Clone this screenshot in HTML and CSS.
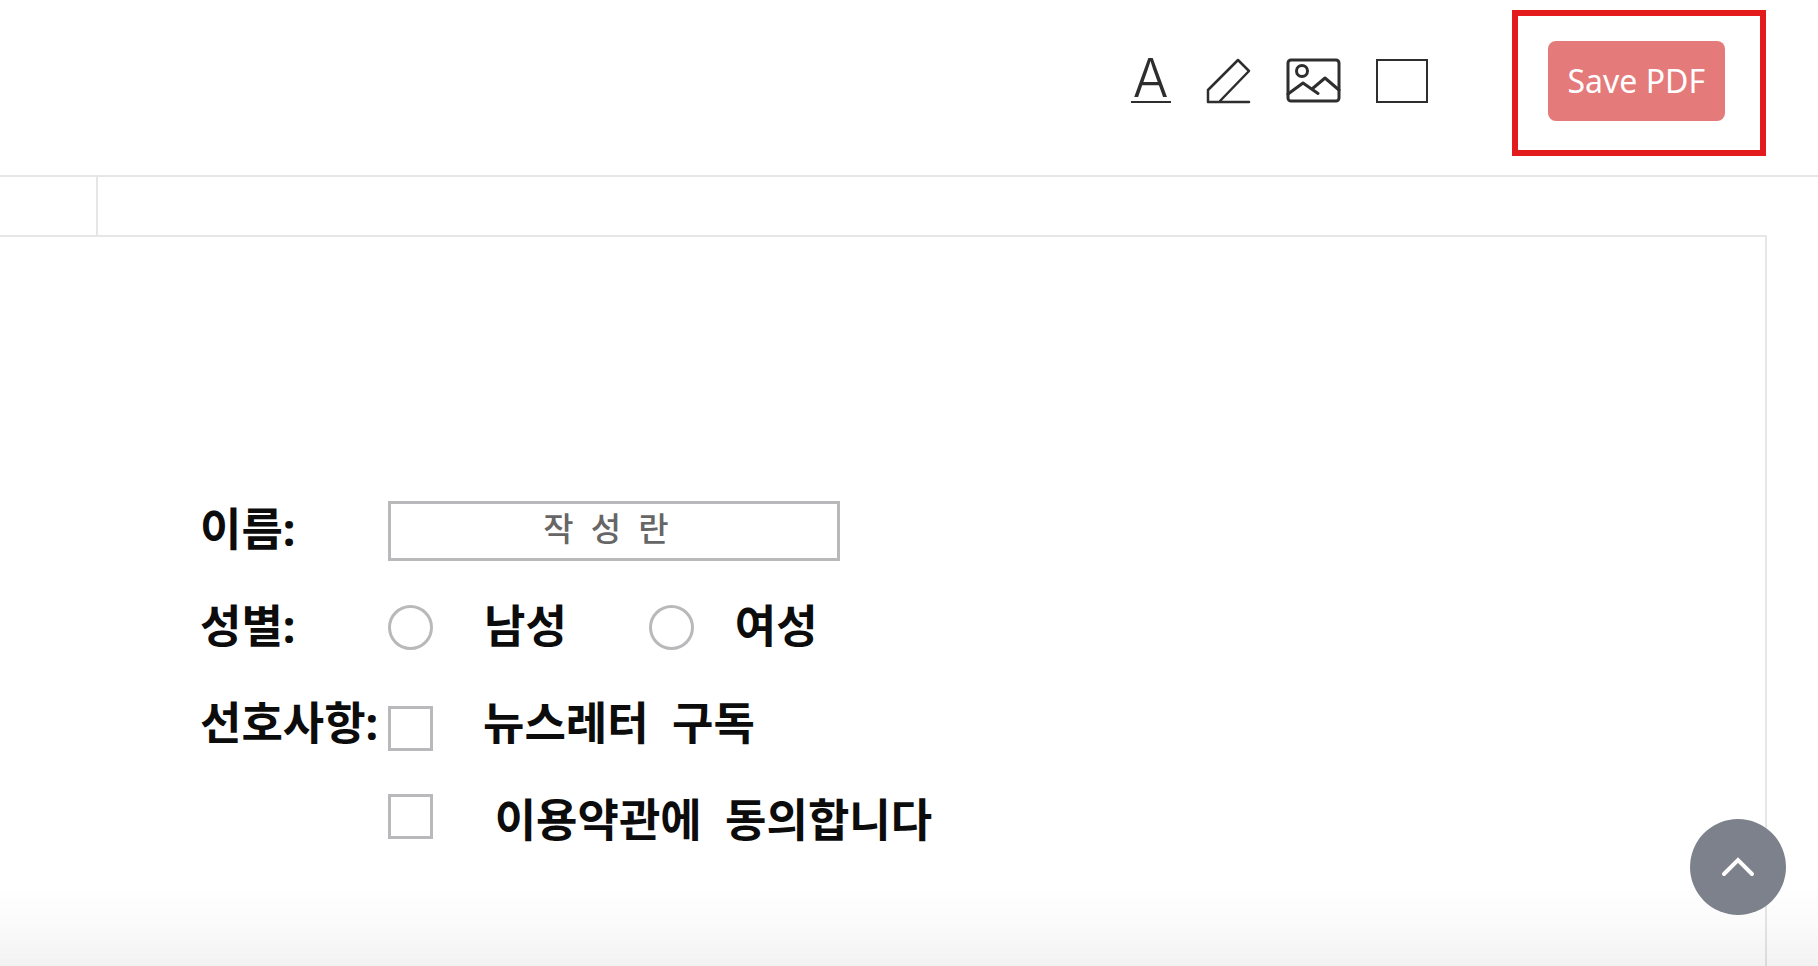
FILE: index.html
```html
<!doctype html>
<html lang="ko">
  <head>
    <meta charset="UTF-8" />
    <meta name="viewport" content="width=device-width, initial-scale=1.0" />
    <title>PDF Form</title>
    <link rel="stylesheet" href="styles.css">
  </head>
  <body>
    <header class="toolbar">
      <div class="tools">
        <button class="tool tool-text" type="button" aria-label="Text">A</button>
        <button class="tool" type="button" aria-label="Draw">
          <svg class="pen" width="46" height="46" viewBox="0 0 46 46">
            <path d="M44 44H3V32L33 2L44 13L15 43" />
          </svg>
        </button>
        <button class="tool" type="button" aria-label="Image">
          <svg class="bold" width="56" height="46" viewBox="0 0 56 46">
            <rect x="3" y="2" width="51" height="41" rx="3" />
            <circle cx="17" cy="13" r="5.5" />
            <path d="M3 36L18 25L33 35.500M27 31L40 20L54 32" />
          </svg>
        </button>
        <button class="tool" type="button" aria-label="Rectangle">
          <svg class="square" width="54" height="46" viewBox="0 0 54 46">
            <rect x="2" y="2" width="50" height="42" />
          </svg>
        </button>
      </div>
      <div class="highlight">
        <button class="save" type="button">Save PDF</button>
      </div>
    </header>

    <div class="strip"><div class="strip-cell"></div></div>

    <main class="document">
      <form class="form">
        <div class="row">
          <label class="name" for="name">이름:</label>
          <input class="field" id="name" type="text" value="작  성  란" />
        </div>
        <div class="row" role="radiogroup" aria-labelledby="gender">
          <span class="name" id="gender">성별:</span>
          <input class="mark round" id="male" type="radio" name="gender" />
          <label class="option male" for="male">남성</label>
          <input class="mark round" id="female" type="radio" name="gender" />
          <label class="option female" for="female">여성</label>
        </div>
        <div class="prefs" role="group" aria-labelledby="prefs">
          <span class="name" id="prefs">선호사항:</span>
          <div class="checks">
            <input class="mark" id="newsletter" type="checkbox" />
            <input class="mark" id="terms" type="checkbox" />
          </div>
          <div class="options">
            <label class="option" for="newsletter">뉴스레터  구독</label>
            <label class="option" for="terms"> 이용약관에  동의합니다</label>
          </div>
        </div>
      </form>
    </main>

    <button class="to-top" type="button" aria-label="Scroll to top">
      <svg width="36" height="24" viewBox="0 0 36 24">
        <path d="M4 19L18 5L32 19" />
      </svg>
    </button>
  </body>
</html>
```
FILE: styles.css
```css
* {
  box-sizing: border-box;
}
body {
  margin: 0;
  height: 100vh;
  overflow: hidden;
  display: flex;
  flex-direction: column;
  background: #fff;
  font-family: "Noto Sans", "Noto Sans CJK KR", sans-serif;
}
/* fade along the bottom of the window */
body::after {
  content: "";
  position: fixed;
  left: 0;
  right: 0;
  bottom: 0;
  height: 80px;
  background: linear-gradient(
    rgba(0, 0, 0, 0),
    rgba(0, 0, 0, 0.02) 50%,
    rgba(0, 0, 0, 0.05)
  );
  pointer-events: none;
}
button {
  font-family: inherit;
  border: none;
  padding: 0;
  cursor: pointer;
}
.toolbar {
  display: flex;
  justify-content: flex-end;
  align-items: flex-start;
  gap: 83px;
  height: 177px;
  padding: 10px 52px 0 0;
  border-bottom: 2px solid #e6e6e6;
}
.tools {
  display: flex;
  gap: 34px;
  padding-top: 48px;
}
.tool {
  background: none;
  height: 46px;
}
.tool svg {
  display: block;
  fill: none;
  stroke: #2e2e2e;
  stroke-width: 2;
  stroke-linejoin: round;
  stroke-linecap: round;
}
.tool svg.bold {
  stroke-width: 3;
}
.tool svg.pen {
  stroke-width: 2.5;
}
.tool svg.square {
  stroke-linejoin: miter;
}
.tool-text {
  width: 40px;
  height: 45px;
  padding-bottom: 4px;
  border-bottom: 2px solid #2e2e2e;
  color: #2e2e2e;
  font-family: Inter, sans-serif;
  font-size: 53px;
  font-weight: 300;
  line-height: 38px;
}
.highlight {
  border: 6px solid #e41b1d;
  padding: 25px 35px 29px 30px;
}
.save {
  display: block;
  padding: 0 20px;
  border-radius: 8px;
  background: #e47a7a;
  color: #fff;
  font-size: 32px;
  line-height: 80px;
}
.strip {
  height: 58px;
  flex: none;
}
.strip-cell {
  width: 98px;
  height: 100%;
  border-right: 2px solid #e6e6e6;
}
.document {
  flex: 1;
  margin-right: 51px;
  padding: 245px 0 0 200px;
  border-top: 2px solid #e6e6e6;
  border-right: 2px solid #e6e6e6;
}
.form {
  color: #0c0c0c;
  font-size: 45px;
  font-weight: 700;
  line-height: 93px;
}
.row {
  display: flex;
  align-items: center;
  height: 97px;
}
.prefs {
  display: flex;
}
.name {
  width: 188px;
  flex: none;
  padding-bottom: 4px;
}
.field {
  width: 452px;
  height: 60px;
  padding: 0 16px 8px 0;
  border: 3px solid #b9b9bc;
  background: #fff;
  color: #666;
  font-family: inherit;
  font-size: 33px;
  font-weight: 500;
  text-align: center;
  white-space: pre;
}
.mark {
  appearance: none;
  flex: none;
  width: 45px;
  height: 45px;
  margin: 0;
  border: 3px solid #b9b9bc;
  background: #fff;
}
.round {
  border-radius: 50%;
}
.option {
  padding-bottom: 4px;
  white-space: pre;
}
.male {
  padding-left: 51px;
  padding-right: 82px;
}
.female {
  padding-left: 41px;
}
.checks {
  display: flex;
  flex-direction: column;
  gap: 43px;
  padding-top: 30px;
}
.options {
  display: flex;
  flex-direction: column;
  padding-left: 50px;
}
.to-top {
  position: fixed;
  right: 32px;
  bottom: 51px;
  z-index: 1;
  display: flex;
  align-items: center;
  justify-content: center;
  width: 96px;
  height: 96px;
  border-radius: 50%;
  background: #7d818c;
}
.to-top svg {
  fill: none;
  stroke: #fff;
  stroke-width: 4;
  stroke-linecap: round;
}
```
